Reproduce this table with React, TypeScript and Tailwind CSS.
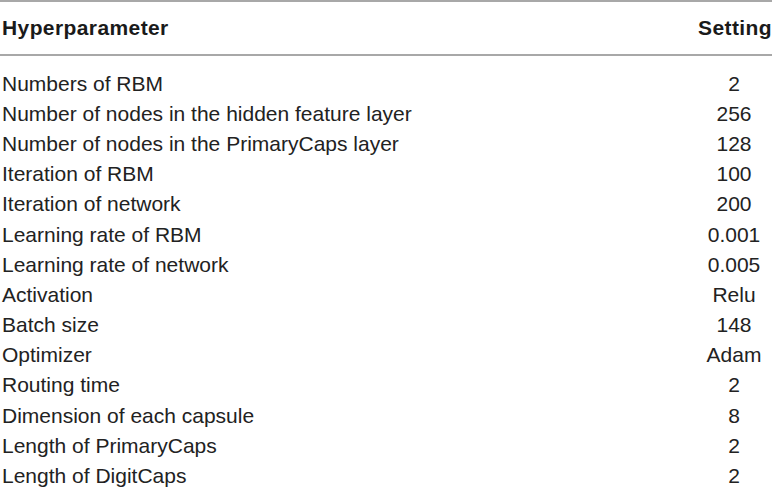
const rows: [string, string][] = [
  ["Numbers of RBM", "2"],
  ["Number of nodes in the hidden feature layer", "256"],
  ["Number of nodes in the PrimaryCaps layer", "128"],
  ["Iteration of RBM", "100"],
  ["Iteration of network", "200"],
  ["Learning rate of RBM", "0.001"],
  ["Learning rate of network", "0.005"],
  ["Activation", "Relu"],
  ["Batch size", "148"],
  ["Optimizer", "Adam"],
  ["Routing time", "2"],
  ["Dimension of each capsule", "8"],
  ["Length of PrimaryCaps", "2"],
  ["Length of DigitCaps", "2"],
]

export default function App() {
  return (
    <div className="w-[772px] h-[487px] overflow-hidden bg-white text-[#222] font-['Liberation_Sans',Arial,sans-serif] text-[21px]">
      <div className="border-t-2 border-b-2 border-[#a8a8a8] flex items-center h-[56px] px-[2px] font-bold text-[#1a1a1a] tracking-[0.4px]">
        <div className="flex-1">Hyperparameter</div>
        <div className="w-[72px] text-center">Setting</div>
      </div>
      <div className="pt-[12px] px-[2px]">
        {rows.map(([name, value]) => (
          <div key={name} className="flex h-[30.2px] items-center leading-none">
            <div className="flex-1">{name}</div>
            <div className="w-[72px] text-center">{value}</div>
          </div>
        ))}
      </div>
    </div>
  )
}
